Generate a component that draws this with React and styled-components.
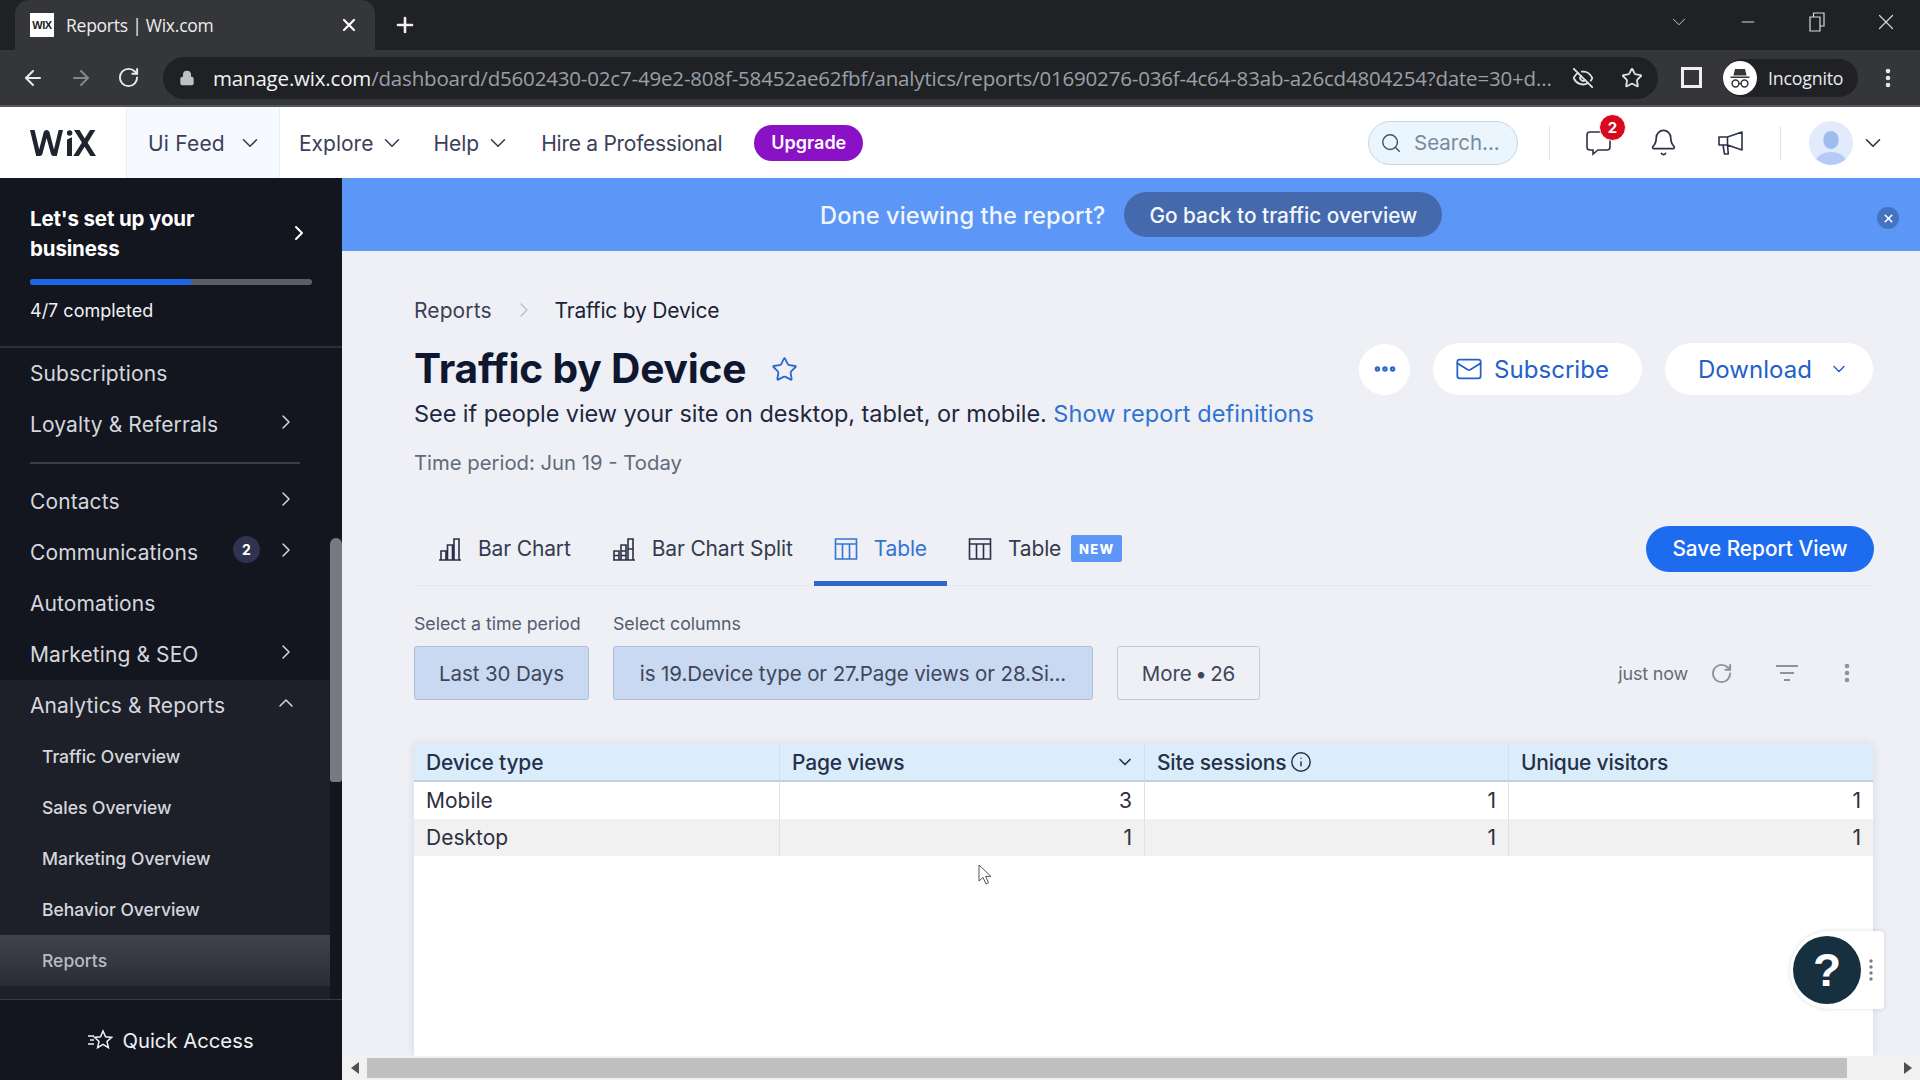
import React from "react";
import styled, { createGlobalStyle } from "styled-components";
import { ArrowLeft, ArrowRight, RotateCw, Lock, Star, EyeOff, Search, Bell, Mail, ChevronDown, ChevronRight, ChevronUp, Plus, X, Minus, EllipsisVertical, Ellipsis, Info } from "lucide-react";

const Global = createGlobalStyle`
  html, body { margin: 0; padding: 0; background: #eef0f5; }
  * { box-sizing: border-box; }
  body { font-family: Inter, "Noto Sans", sans-serif; }
`;

const Page = styled.div`
  width: 1920px; height: 1080px; overflow: hidden; position: relative;
  display: flex; flex-direction: column;
`;

/* Browser chrome */
const TabStrip = styled.div`
  height: 50px; background: #202124; display: flex; align-items: flex-end; padding-left: 15px; color: #fff; flex: none;
`;
const Tab = styled.div`
  width: 360px; height: 50px; background: #35363a; border-radius: 14px 14px 0 0;
  display: flex; align-items: center; padding: 0 16px 0 15px;
`;
const Favicon = styled.div`
  width: 24px; height: 24px; background: #fff; color: #222; font: 700 11px/24px "Liberation Sans", sans-serif;
  text-align: center; letter-spacing: -0.5px;
`;
const TabTitle = styled.span`
  margin-left: 12px; font: 400 17.5px "Open Sans", sans-serif; color: #eceded; flex: 1; letter-spacing: -0.25px;
`;
const WindowControls = styled.div`
  margin-left: auto; display: flex; align-items: center; height: 44px; align-self: flex-start; color: #d6d7d9;
`;
const WinBtn = styled.span`
  width: 69px; display: flex; justify-content: center; align-items: center;
`;
const NewTab = styled.span`
  margin-left: 18px; align-self: center; display: flex; color: #f1f1f1;
`;
const AddressBar = styled.div`
  height: 57px; background: #35363a; border-bottom: 2px solid #55565a; display: flex; align-items: center; padding-left: 21px; flex: none; color: #e8eaed;
`;
const NavIcon = styled.span`
  width: 24px; margin-right: 24px; display: flex; color: ${p => p.$dim ? "#84868a" : "#e8eaed"};
`;
const Omnibox = styled.div`
  margin-left: -2px; width: 1495px; height: 42px; background: #202124; border-radius: 21px; display: flex; align-items: center; padding-left: 16px;
`;
const Url = styled.div`
  margin-left: 18px; font: 400 20.5px "Open Sans", sans-serif; color: #9aa0a6; white-space: nowrap; letter-spacing: -0.18px; width: 1340px; overflow: hidden;
  b { font-weight: 400; color: #f1f3f4; }
`;
const OmniIcon = styled.span`
  display: flex; color: #dfe1e5; margin-left: ${p => p.$gap || 0}px;
`;
const SidePanelIcon = styled.span`
  margin-left: 23px; width: 21px; height: 21px; background: #f0f0f0; display: flex; padding: 3px;
  &::after { content: ""; flex: 1; background: #35363a; }
`;
const IncognitoPill = styled.div`
  margin-left: 21px; width: 135px; height: 38px; background: #202124; border-radius: 19px; display: flex; align-items: center;
`;
const IncognitoAvatar = styled.div`
  width: 34px; height: 34px; background: #fff; border-radius: 50%; display: flex; align-items: center; justify-content: center;
`;
const IncognitoText = styled.span`
  margin-left: 11px; font: 400 17.8px "Open Sans", sans-serif; color: #e8eaed; letter-spacing: -0.2px;
`;
const ChromeMenu = styled.span`
  margin-left: 18px; display: flex; color: #e8eaed;
`;

/* Wix top nav */
const TopNav = styled.div`
  height: 71px; background: #fff; display: flex; align-items: center; flex: none; color: #3b4057;
  font-size: 21px; line-height: 27px;
`;
const Logo = styled.div`
  width: 126px; padding-left: 30px; flex: none; display: flex;
`;
const SiteTab = styled.div`
  width: 154px; height: 71px; background: #f6f9fd; border-left: 1px solid #e8eef5; border-right: 1px solid #e8eef5;
  display: flex; align-items: center; justify-content: space-between; padding: 1px 19px 0 21px; letter-spacing: 0.2px;
`;
const NavLink = styled.span`
  display: flex; align-items: center; gap: 8px; padding-top: 1px; margin-left: ${p => p.$gap}px; letter-spacing: ${p => p.$tight ? "-0.27px" : "0"};
`;
const NavChevron = styled(ChevronDown).attrs({ size: 26, strokeWidth: 1.5 })`
  margin: 0 -2.5px; flex: none;
`;
const Upgrade = styled.span`
  margin-left: 32px; width: 109px; height: 36px; border-radius: 18px; background: #8a11c6; color: #fff; font-size: 18px; font-weight: 600;
  display: flex; align-items: center; justify-content: center;
`;
const NavRight = styled.div`
  margin-left: auto; display: flex; align-items: center; padding-right: 37px;
`;
const SearchBox = styled.div`
  width: 150px; height: 44px; border-radius: 22px; background: #eaf5fe; border: 1px solid #c3d8ec; display: flex; align-items: center; gap: 12px; padding-left: 11px;
  color: #7a8a9c; font-size: 20.5px;
`;
const VSep = styled.span`
  width: 1px; height: 34px; background: #e0e3e8; margin-left: ${p => p.$l}px;
`;
const NavIconWrap = styled.span`
  display: flex; position: relative; margin-left: ${p => p.$gap}px; color: #2b3247;
`;
const Badge = styled.span`
  position: absolute; top: -15px; left: 13px; width: 27px; height: 27px; border-radius: 50%; background: #d8091f; color: #fff;
  font-size: 15px; font-weight: 700; display: flex; align-items: center; justify-content: center; border: 1px solid #fff;
`;
const AvatarCircle = styled.div`
  margin-left: 28px; width: 44px; height: 44px; border-radius: 50%; background: #e2ebfb; overflow: hidden; flex: none; display: flex;
`;
const AvatarChevron = styled.span`
  margin-left: 9px; display: flex; color: #2b3247;
`;

/* Body */
const Body = styled.div`
  flex: 1; display: flex; min-height: 0;
`;
const Sidebar = styled.aside`
  width: 342px; flex: none; background: #13151f; display: flex; flex-direction: column; color: #d5d7dd;
`;
const Setup = styled.div`
  height: 170px; border-bottom: 2px solid #2c2e38; padding: 26px 30px 0; position: relative; flex: none;
`;
const SetupTitle = styled.div`
  font-size: 20.5px; line-height: 30px; font-weight: 700; color: #fff; width: 230px; letter-spacing: -0.15px;
`;
const SetupChevron = styled.span`
  position: absolute; top: 43px; right: 31px; display: flex; color: #fff;
`;
const Progress = styled.div`
  margin-top: 15px; width: 282px; height: 6px; border-radius: 3px; background: #5b5e69; overflow: hidden;
`;
const ProgressFill = styled.div`
  height: 100%; background: #1d66e8;
`;
const Completed = styled.div`
  margin-top: 15px; font-size: 18px; color: #f0f1f4;
`;
const MenuWrap = styled.div`
  flex: 1; display: flex; min-height: 0;
`;
const Menu = styled.div`
  flex: 1; display: flex; flex-direction: column; min-width: 0;
`;
const Rail = styled.div`
  width: 12px; flex: none;
`;
const Thumb = styled.div`
  margin-top: 190px; height: 244px; background: #787a82; border-radius: 6px 6px 3px 3px;
`;
const Row = styled.div`
  height: 51px; flex: none; display: flex; align-items: center; padding: 0 32px 0 30px;
  font-size: 21px; color: #d5d7dd; letter-spacing: 0.1px;
`;
const RowLabel = styled.span`
  flex: 1;
`;
const RowBadge = styled.span`
  width: 27px; height: 27px; border-radius: 50%; background: #2f3350; color: #fff; font-size: 14px; font-weight: 700;
  display: flex; align-items: center; justify-content: center; margin-right: 16px; margin-top: -6px;
`;
const RowChevron = styled.span`
  display: flex; margin-top: -6px; color: #d5d7dd; width: 24px; margin-left: -2px; justify-content: center;
`;
const MenuDivider = styled.div`
  height: 26px; flex: none; display: flex; align-items: center; padding: 0 30px 0 30px;
  &::after { content: ""; height: 2px; flex: 1; background: #3b3d47; }
`;
const Section = styled.div`
  flex: 1; background: #1e2029; display: flex; flex-direction: column; padding-bottom: 13px;
`;
const SubRow = styled.div`
  height: 51px; flex: none; display: flex; align-items: center; padding-left: 42px; font-size: 17.5px; color: ${p => p.$active ? "#b9bcc4" : "#d5d7dd"};
  font-weight: 500;
  background: ${p => p.$active ? "linear-gradient(#40434d, #2a2c35)" : "transparent"};
`;
const QuickAccess = styled.div`
  height: 81px; flex: none; border-top: 1px solid #3a3c46; display: flex; align-items: center; justify-content: center; gap: 9px;
  color: #eff0f3; font-size: 20.3px;
`;

/* Main */
const Main = styled.main`
  flex: 1; min-width: 0; display: flex; flex-direction: column; background: #eef0f5;
`;
const Banner = styled.div`
  height: 73px; flex: none; background: #5c96f6; display: flex; align-items: center; padding: 0 0 0 478px; position: relative;
`;
const BannerText = styled.span`
  font-size: 23.6px; font-weight: 500; color: #f2f6fe; letter-spacing: 0.1px; padding-top: 1px;
`;
const BannerBtn = styled.span`
  margin-left: 19px; width: 318px; height: 45px; border-radius: 23px; background: #4469ad; color: #f4f7fc; font-size: 20.8px; font-weight: 500;
  display: flex; align-items: center; justify-content: center; padding-top: 1px;
`;
const BannerClose = styled.span`
  position: absolute; right: 21px; top: 29px; width: 22px; height: 22px; border-radius: 50%; background: #4473c1; color: #fff; display: flex; align-items: center; justify-content: center;
`;
const Content = styled.div`
  flex: 1; min-height: 0; padding: 0 47px 0 72px; display: flex; flex-direction: column;
`;
const Crumbs = styled.div`
  margin-top: 45px; display: flex; align-items: center; height: 28px; font-size: 21px; color: #3b4057; letter-spacing: 0.1px;
`;
const CrumbSep = styled.span`
  display: flex; color: #b6bbc7; margin: 0 19px 0 20px;
`;
const CrumbNow = styled.span`
  color: #1a2238; letter-spacing: -0.2px;
`;
const TitleRow = styled.div`
  margin-top: 19px; height: 52px; display: flex; align-items: center; 
`;
const Title = styled.h1`
  margin: 0; font-size: 40.7px; font-weight: 700; color: #0f1730; letter-spacing: -0.2px; line-height: 1;
`;
const TitleStar = styled.span`
  margin-left: 25px; display: flex; color: #2d66cc;
`;
const Actions = styled.div`
  margin-left: auto; display: flex; align-items: center; gap: 23px;
`;
const RoundBtn = styled.span`
  width: 51px; height: 51px; border-radius: 50%; background: #fff; color: #2d66cc; display: flex; align-items: center; justify-content: center;
`;
const PillBtn = styled.span`
  width: ${p => p.$w}px; height: 52px; border-radius: 26px; background: #fff; color: #2460c8; font-size: 24px; letter-spacing: 0.05px;
  display: flex; align-items: center; justify-content: center; gap: ${p => p.$gap}px;
  padding: ${p => p.$pad};
`;
const Description = styled.div`
  margin-top: 2px; font-size: 23.5px; color: #1f2740; line-height: 34px; letter-spacing: -0.06px;
  a { color: #2e72d2; text-decoration: none; letter-spacing: 0.1px; }
`;
const TimePeriod = styled.div`
  margin-top: 17px; font-size: 20.3px; color: #62697a; line-height: 30px;
`;
const TabsRow = styled.div`
  margin-top: 34px; height: 74px; display: flex; align-items: center; gap: 1px; border-bottom: 1px solid #e6e8ee; position: relative; flex: none;
`;
const ViewTab = styled.div`
  height: 70px; display: flex; align-items: center; gap: 16px; padding: 0 20px; margin-top: 4px; font-size: 21px; letter-spacing: -0.15px;
  color: ${p => p.$active ? "#3374d4" : "#343b50"};
  border-bottom: 5px solid ${p => p.$active ? "#2d66cc" : "transparent"};
  margin-bottom: -1px;
  &:first-child { margin-left: 4px; }
  svg { color: ${p => p.$active ? "#3374d4" : "#2a3045"}; }
`;
const NewBadge = styled.span`
  margin-left: -11px; width: 51px; height: 27px; background: #5c96f6; color: #fff; font-size: 13px; font-weight: 800; letter-spacing: 1.3px;
  border-radius: 2px; display: flex; align-items: center; justify-content: center;
`;
const SaveBtn = styled.span`
  margin-left: auto; margin-right: -1px; width: 228px; height: 46px; border-radius: 23px; background: #1d6cf0; color: #fff; font-size: 20.8px; font-weight: 500;
  display: flex; align-items: center; justify-content: center;
`;
const FilterArea = styled.div`
  margin-top: 24px; display: flex; align-items: flex-end; flex: none;
`;
const Field = styled.div`
  display: flex; flex-direction: column; margin-right: ${p => p.$mr}px;
`;
const FieldLabel = styled.label`
  font-size: 17.8px; color: #555c6e; line-height: 28px; height: 36px; letter-spacing: -0.05px;
`;
const Chip = styled.div`
  width: ${p => p.$w}px; height: 54px; border-radius: 3px; border: 1px solid ${p => p.$on ? "#aebfdc" : "#c6c9cf"};
  background: ${p => p.$on ? "#c9d9f1" : "transparent"}; color: #3f4659; font-size: 20.5px; letter-spacing: -0.1px;
  display: flex; align-items: center; justify-content: center; white-space: nowrap;
`;
const Tools = styled.div`
  margin-left: auto; height: 54px; display: flex; align-items: center; color: #8f9297; padding-right: 14px;
`;
const JustNow = styled.span`
  font-size: 18px; color: #666b78; letter-spacing: -0.2px;
`;
const ToolIcon = styled.span`
  display: flex; margin-left: ${p => p.$gap}px; color: ${p => p.$c || "#8f9297"};
`;
const TableCard = styled.div`
  margin-top: 44px; flex: 1; min-height: 0; background: #fff; box-shadow: 0 0 8px rgba(70, 80, 100, 0.14);
  color: #222a3d; font-size: 21px;
`;
const TableGrid = styled.div`
  display: grid; grid-template-columns: 365px 365px 364px 1fr;
`;
const HeadCell = styled.div`
  height: 38px; background: #dbedfb; border-bottom: 2px solid #bfd0de; display: flex; align-items: center; justify-content: space-between; padding: 0 12px;
  font-weight: 500; color: #27304a; letter-spacing: -0.2px;
  & + & { border-left: 1px solid #cfe0ee; }
  > svg { margin-right: -3px; }
`;
const HeadGroup = styled.span`
  display: flex; align-items: center; gap: 4px;
`;
const Cell = styled.div`
  height: 37px; display: flex; align-items: center; padding: 0 12px; background: ${p => p.$alt ? "#f1f1f1" : "#fff"};
  justify-content: ${p => p.$num ? "flex-end" : "flex-start"};
  color: #2b3040; font-weight: 400;
  border-left: ${p => p.$num ? "1px solid #dfe1e4" : "none"};
`;
const HScroll = styled.div`
  height: 24px; flex: none; background: #f1f1f1; display: flex; align-items: center; padding: 2px 0;
  color: #505050;
`;
const HArrow = styled.span`
  width: 25px; flex: none; display: flex; justify-content: center;
`;
const HThumb = styled.div`
  width: 1480px; height: 20px; background: #c0c0c0;
`;
const HSpacer = styled.div`
  flex: 1;
`;
const Help = styled.div`
  position: absolute; left: 1790px; top: 931px; width: 94px; height: 78px; background: #fff; border-radius: 39px 4px 4px 39px;
  box-shadow: 0 0 4px rgba(40,50,70,0.16); display: flex; align-items: center; padding-left: 3px;
`;
const HelpCircle = styled.div`
  width: 68px; height: 68px; border-radius: 50%; background: #16303f; color: #fff; font: 700 46px "Liberation Sans", sans-serif; display: flex; align-items: center; justify-content: center;
`;
const HelpDots = styled.span`
  margin-left: 7px; display: flex; color: #777c86;
`;
const Cursor = styled.svg`
  position: absolute; left: 978px; top: 864px;
`;

const BarIcon = () => (
  <svg width="24" height="24" viewBox="0 0 24 24" fill="none" stroke="currentColor" strokeWidth="1.6">
    <path d="M1 23h22M3 23V14h5v9M9.5 23V8h5v15M16 23V2h5v21" />
  </svg>
);
const BarSplitIcon = () => (
  <svg width="24" height="24" viewBox="0 0 24 24" fill="none" stroke="currentColor" strokeWidth="1.6">
    <path d="M1 23h22M2 23v-9h5v9M2 18.5h5M9 23V8h5v15M9 14h5M9 18.5h5M16 23V2h5v21M16 12h5" />
  </svg>
);
const TableIcon = () => (
  <svg width="24" height="24" viewBox="0 0 24 24" fill="none" stroke="currentColor" strokeWidth="1.6">
    <path d="M1.5 2h21v20h-21zM1.5 7h21M8.5 7v15M15.5 7v15" />
  </svg>
);
const WixLogo = () => (
  <svg width="66" height="26" viewBox="0 0 66 26" fill="#20242f">
    <path d="M0 0h4.600l4.600 19.600L13.600 2.600C14 1 15.200 0 16.600 0s2.600 1 3 2.600l4.400 17L28.600 0H33l-6.200 26h-3.200c-1.200 0-2.200-.8-2.600-2L16.600 8 12.400 24c-.4 1.200-1.400 2-2.600 2H6.200z" />
    <path d="M37 9.500l5-2.300V26h-5z" />
    <circle cx="39.600" cy="3" r="2.700" />
    <path d="M44 0h5.600l5.100 8.400L60 0h5.400l-7.800 12.700L66 26h-5.600l-5.800-9.200-5.800 9.200h-5.500l8.600-13.400z" />
  </svg>
);
const ChatIcon = () => (
  <svg width="26" height="27" viewBox="0 0 26 27" fill="none" stroke="currentColor" strokeWidth="1.6">
    <path d="M4 3h17a3 3 0 0 1 3 3v12a3 3 0 0 1-3 3H12l-5 4v-4H4a3 3 0 0 1-3-3V6a3 3 0 0 1 3-3z" />
  </svg>
);
const MegaphoneIcon = () => (
  <svg width="27" height="26" viewBox="0 0 27 26" fill="none" stroke="currentColor" strokeWidth="1.6" strokeLinejoin="round">
    <path d="M2 7h8.500L25 2v18l-14.500-5H2zM10.500 7v8M6 15l1.500 9h3.800l-.8-9" />
  </svg>
);
const QuickIcon = () => (
  <svg width="25" height="22" viewBox="0 0 25 22" fill="none" stroke="currentColor" strokeWidth="1.5">
    <path d="M15 2l2.600 5.800 6 .6-4.600 4 1.400 6.200-5.400-3.200-5.400 3.200 1.400-6.200-4.400-4 6-.6zM0 7h6M2 11h4M0 15h6" />
  </svg>
);
const RestoreIcon = () => (
  <svg width="16" height="20" viewBox="0 0 16 20" fill="none" stroke="currentColor" strokeWidth="1.2">
    <path d="M1 5h10v14H1zM4.500 5V1H15v13h-4" />
  </svg>
);
const IncognitoGlyph = () => (
  <svg width="24" height="24" viewBox="0 0 24 24" fill="#35363a">
    <path d="M7 3h10l1.600 6.500H5.400zM2.500 10.500h19v1.600h-19z" />
    <circle cx="7.500" cy="17.500" r="3.400" fill="none" stroke="#35363a" strokeWidth="1.500" />
    <circle cx="16.500" cy="17.500" r="3.400" fill="none" stroke="#35363a" strokeWidth="1.500" />
    <path d="M10.800 17h2.400v1.200h-2.400z" />
  </svg>
);
const AvatarGlyph = () => (
  <svg width="44" height="44" viewBox="0 0 44 44">
    <rect x="14.500" y="10" width="15" height="18" rx="7.500" fill="#9fbcf0" />
    <ellipse cx="22" cy="45" rx="17" ry="14" fill="#b5cbf5" />
  </svg>
);

const menuTop = [
  { label: "Subscriptions" },
  { label: "Loyalty & Referrals", arrow: true },
];
const menuMid = [
  { label: "Contacts", arrow: true },
  { label: "Communications", arrow: true, badge: 2 },
  { label: "Automations" },
  { label: "Marketing & SEO", arrow: true },
];
const subItems = ["Traffic Overview", "Sales Overview", "Marketing Overview", "Behavior Overview"];
const rows = [
  ["Mobile", 3, 1, 1],
  ["Desktop", 1, 1, 1],
];

const MenuRow = ({ label, arrow, badge }) => (
  <Row>
    <RowLabel>{label}</RowLabel>
    {badge && <RowBadge>{badge}</RowBadge>}
    {arrow && <RowChevron><ChevronRight size={24} strokeWidth={1.5} /></RowChevron>}
  </Row>
);

export default function App() {
  return (
    <Page>
      <Global />
      <TabStrip>
        <Tab>
          <Favicon>WIX</Favicon>
          <TabTitle>Reports | Wix.com</TabTitle>
          <X size={20} strokeWidth={2.6} />
        </Tab>
        <NewTab><Plus size={24} strokeWidth={2.6} /></NewTab>
        <WindowControls>
          <WinBtn><ChevronDown size={22} strokeWidth={1} /></WinBtn>
          <WinBtn><Minus size={20} strokeWidth={1.4} /></WinBtn>
          <WinBtn><RestoreIcon /></WinBtn>
          <WinBtn><X size={26} strokeWidth={1.1} /></WinBtn>
        </WindowControls>
      </TabStrip>
      <AddressBar>
        <NavIcon><ArrowLeft size={24} strokeWidth={2} /></NavIcon>
        <NavIcon $dim><ArrowRight size={24} strokeWidth={2} /></NavIcon>
        <NavIcon><RotateCw size={23} strokeWidth={2} /></NavIcon>
        <Omnibox>
          <OmniIcon><Lock size={16} fill="#bdc1c6" color="#bdc1c6" /></OmniIcon>
          <Url><b>manage.wix.com</b>/dashboard/d5602430-02c7-49e2-808f-58452ae62fbf/analytics/reports/01690276-036f-4c64-83ab-a26cd4804254?date=30+d...</Url>
          <OmniIcon $gap={19}><EyeOff size={22} strokeWidth={2} /></OmniIcon>
          <OmniIcon $gap={27}><Star size={22} strokeWidth={2} /></OmniIcon>
        </Omnibox>
        <SidePanelIcon />
        <IncognitoPill>
          <IncognitoAvatar><IncognitoGlyph /></IncognitoAvatar>
          <IncognitoText>Incognito</IncognitoText>
        </IncognitoPill>
        <ChromeMenu><EllipsisVertical size={24} strokeWidth={2.6} /></ChromeMenu>
      </AddressBar>

      <TopNav>
        <Logo><WixLogo /></Logo>
        <SiteTab>
          <span>Ui Feed</span>
          <NavChevron />
        </SiteTab>
        <NavLink $gap={19}>Explore <NavChevron /></NavLink>
        <NavLink $gap={31}>Help <NavChevron /></NavLink>
        <NavLink $gap={33} $tight>Hire a Professional</NavLink>
        <Upgrade>Upgrade</Upgrade>
        <NavRight>
          <SearchBox><Search size={22} strokeWidth={1.6} color="#3c566e" />Search...</SearchBox>
          <VSep $l={31} />
          <NavIconWrap $gap={36}><ChatIcon /><Badge>2</Badge></NavIconWrap>
          <NavIconWrap $gap={37}><Bell size={29} strokeWidth={1.4} /></NavIconWrap>
          <NavIconWrap $gap={39}><MegaphoneIcon /></NavIconWrap>
          <VSep $l={36} />
          <AvatarCircle><AvatarGlyph /></AvatarCircle>
          <AvatarChevron><NavChevron /></AvatarChevron>
        </NavRight>
      </TopNav>

      <Body>
        <Sidebar>
          <Setup>
            <SetupTitle>Let's set up your business</SetupTitle>
            <SetupChevron><ChevronRight size={24} strokeWidth={2} /></SetupChevron>
            <Progress><ProgressFill style={{ width: `${(4 / 7) * 100}%` }} /></Progress>
            <Completed>4/7 completed</Completed>
          </Setup>
          <MenuWrap>
            <Menu>
              {menuTop.map(m => <MenuRow key={m.label} {...m} />)}
              <MenuDivider />
              {menuMid.map(m => <MenuRow key={m.label} {...m} />)}
              <Section>
                <Row>
                  <RowLabel>Analytics &amp; Reports</RowLabel>
                  <RowChevron><ChevronUp size={24} strokeWidth={1.5} /></RowChevron>
                </Row>
                {subItems.map(s => <SubRow key={s}>{s}</SubRow>)}
                <SubRow $active>Reports</SubRow>
              </Section>
            </Menu>
            <Rail><Thumb /></Rail>
          </MenuWrap>
          <QuickAccess><QuickIcon />Quick Access</QuickAccess>
        </Sidebar>

        <Main>
          <Banner>
            <BannerText>Done viewing the report?</BannerText>
            <BannerBtn>Go back to traffic overview</BannerBtn>
            <BannerClose><X size={13} strokeWidth={3} /></BannerClose>
          </Banner>
          <Content>
            <Crumbs>
              <span>Reports</span>
              <CrumbSep><ChevronRight size={24} strokeWidth={1.2} /></CrumbSep>
              <CrumbNow>Traffic by Device</CrumbNow>
            </Crumbs>
            <TitleRow>
              <Title>Traffic by Device</Title>
              <TitleStar><Star size={27} strokeWidth={1.6} /></TitleStar>
              <Actions>
                <RoundBtn><Ellipsis size={26} strokeWidth={3} /></RoundBtn>
                <PillBtn $w={209} $gap={11} $pad="0 11px 0 0"><Mail size={28} strokeWidth={1.5} />Subscribe</PillBtn>
                <PillBtn $w={208} $gap={17} $pad="0 0 0 9px">Download<ChevronDown size={20} strokeWidth={1.7} /></PillBtn>
              </Actions>
            </TitleRow>
            <Description>See if people view your site on desktop, tablet, or mobile. <a>Show report definitions</a></Description>
            <TimePeriod>Time period: Jun 19 - Today</TimePeriod>
            <TabsRow>
              <ViewTab><BarIcon />Bar Chart</ViewTab>
              <ViewTab><BarSplitIcon />Bar Chart Split</ViewTab>
              <ViewTab $active><TableIcon />Table</ViewTab>
              <ViewTab><TableIcon />Table</ViewTab>
              <NewBadge>NEW</NewBadge>
              <SaveBtn>Save Report View</SaveBtn>
            </TabsRow>
            <FilterArea>
              <Field $mr={24}>
                <FieldLabel>Select a time period</FieldLabel>
                <Chip $on $w={175}>Last 30 Days</Chip>
              </Field>
              <Field $mr={24}>
                <FieldLabel>Select columns</FieldLabel>
                <Chip $on $w={480}>is 19.Device type or 27.Page views or 28.Si...</Chip>
              </Field>
              <Chip $w={143}>{"More\u2009•\u200926"}</Chip>
              <Tools>
                <JustNow>just now</JustNow>
                <ToolIcon $gap={22}><RotateCw size={23} strokeWidth={2} /></ToolIcon>
                <ToolIcon $gap={42}>
                  <svg width="24" height="18" viewBox="0 0 24 18" fill="none" stroke="currentColor" strokeWidth="2"><path d="M1 2h22M5 9h14M9 16h6" /></svg>
                </ToolIcon>
                <ToolIcon $gap={36}><EllipsisVertical size={24} strokeWidth={2.6} /></ToolIcon>
              </Tools>
            </FilterArea>
            <TableCard>
              <TableGrid>
                <HeadCell>Device type</HeadCell>
                <HeadCell>Page views<ChevronDown size={20} strokeWidth={2} /></HeadCell>
                <HeadCell><HeadGroup>Site sessions <Info size={22} strokeWidth={1.6} /></HeadGroup></HeadCell>
                <HeadCell>Unique visitors</HeadCell>
                {rows.map((r, i) => (
                  <React.Fragment key={r[0]}>
                    <Cell $alt={i === 1}>{r[0]}</Cell>
                    <Cell $alt={i === 1} $num>{r[1]}</Cell>
                    <Cell $alt={i === 1} $num>{r[2]}</Cell>
                    <Cell $alt={i === 1} $num>{r[3]}</Cell>
                  </React.Fragment>
                ))}
              </TableGrid>
            </TableCard>
          </Content>
          <HScroll>
            <HArrow>
              <svg width="8" height="12" viewBox="0 0 8 12" fill="currentColor"><path d="M8 0v12L0 6z" /></svg>
            </HArrow>
            <HThumb />
            <HSpacer />
            <HArrow>
              <svg width="8" height="12" viewBox="0 0 8 12" fill="currentColor"><path d="M0 0v12l8-6z" /></svg>
            </HArrow>
          </HScroll>
        </Main>
      </Body>
      <Help>
        <HelpCircle>?</HelpCircle>
        <HelpDots>
          <svg width="6" height="24" viewBox="0 0 6 24" fill="currentColor">
            <circle cx="3" cy="3" r="1.7" /><circle cx="3" cy="9" r="1.7" /><circle cx="3" cy="15" r="1.7" /><circle cx="3" cy="21" r="1.7" />
          </svg>
        </HelpDots>
      </Help>
      <Cursor width="14" height="22" viewBox="0 0 14 22" fill="#fff" stroke="#555" strokeWidth="1">
        <path d="M1 1v16l4-3.6 3 6.6 2.6-1.2-3-6.4H13z" />
      </Cursor>
    </Page>
  );
}
